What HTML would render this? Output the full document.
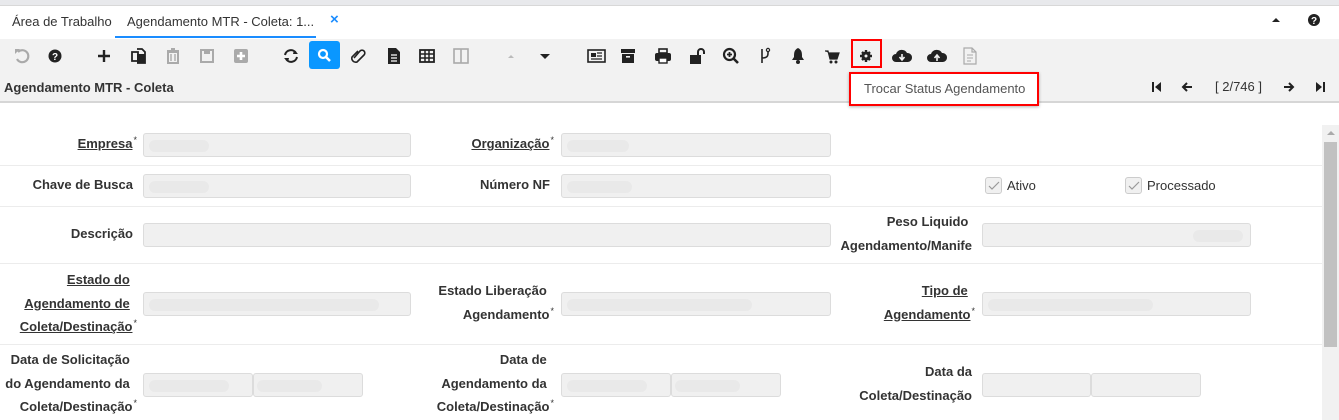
<!DOCTYPE html>
<html><head><meta charset="utf-8">
<style>
*{margin:0;padding:0;box-sizing:border-box}
body{width:1339px;height:420px;overflow:hidden;background:#fff;font-family:"Liberation Sans",Arial,sans-serif;position:relative;color:#333}
.a{position:absolute}
.topstrip{left:0;top:0;width:1339px;height:6px;background:#e8e9ec;border-bottom:1px solid #d8d8d8}
.tabs{left:0;top:7px;width:1339px;height:32px;background:#fff}
.tab{font-size:13px;color:#333;top:14px}
.tb{left:0;top:39px;width:1339px;height:64px;background:#f2f2f2;border-bottom:2px solid #d6d6d6}
.ic{position:absolute;top:46px;width:20px;height:20px}
.lbl{position:absolute;font-size:13px;font-weight:bold;color:#333;text-align:right;line-height:23.5px;white-space:nowrap}
.lbl u{text-decoration:underline}
.lbl s{text-decoration:none;font-size:9px;font-weight:normal;position:relative;top:-5px;margin-left:1px;line-height:0}
.f{position:absolute;height:24px;background:#f0f0f0;border:1px solid #dcdcdc;border-radius:3px}
.f i{position:absolute;top:6px;height:12px;background:#e9e9e9;border-radius:6px}
.line{position:absolute;left:0;width:1322px;height:1px;background:#ececec}
</style></head><body>
<div class="a topstrip"></div>
<div class="a tabs"></div>
<div class="a tab" style="left:12px">Área de Trabalho</div>
<div class="a tab" style="left:127px">Agendamento MTR - Coleta: 1...</div>
<div class="a" style="left:330px;top:11px;color:#1a8cff;font-size:15px;font-weight:bold">×</div>
<div class="a" style="left:115px;top:36px;width:201px;height:2px;background:#1a8cff"></div>
<svg class="a" style="left:1270px;top:15px" width="12" height="10"><path d="M2 7 L6 3 L10 7Z" fill="#222"/></svg>
<svg class="a" style="left:1307px;top:13px" width="14" height="14"><circle cx="7" cy="7" r="6" fill="#222"/><text x="7" y="11" font-size="10" font-weight="bold" fill="#fff" text-anchor="middle" font-family="Liberation Sans">?</text></svg>

<div class="a tb"></div>
<svg class="ic" style="left:12px" viewBox="0 0 20 20"><path d="M6 6 A6 6 0 1 1 5 13" fill="none" stroke="#aaa" stroke-width="2.2"/><path d="M3 3 L8 3 L3 8Z" fill="#aaa"/></svg>
<svg class="ic" style="left:45px" viewBox="0 0 20 20"><circle cx="10" cy="10" r="6.5" fill="#222"/><text x="10" y="14" font-size="10" font-weight="bold" fill="#fff" text-anchor="middle" font-family="Liberation Sans">?</text></svg>
<svg class="ic" style="left:94px" viewBox="0 0 20 20"><path d="M10 4V16M4 10H16" stroke="#222" stroke-width="2.4"/></svg>
<svg class="ic" style="left:129px" viewBox="0 0 20 20"><path d="M3 6H9V15H3Z M8 3H13L16 6V17H8" fill="none" stroke="#222" stroke-width="1.8"/><rect x="8" y="8" width="8" height="9" fill="#222"/></svg>
<svg class="ic" style="left:163px" viewBox="0 0 20 20"><path d="M4 5H16M8 3H12M5 6H15V17H5Z" fill="none" stroke="#aaa" stroke-width="2"/><path d="M8 8V15M12 8V15" stroke="#aaa" stroke-width="1.4"/></svg>
<svg class="ic" style="left:197px" viewBox="0 0 20 20"><rect x="4" y="4" width="12" height="12" fill="none" stroke="#aaa" stroke-width="2"/><rect x="7" y="4" width="6" height="4" fill="#aaa"/></svg>
<svg class="ic" style="left:231px" viewBox="0 0 20 20"><rect x="3" y="3" width="14" height="14" rx="2" fill="#aaa"/><path d="M10 6V14M6 10H14" stroke="#fff" stroke-width="2.6"/></svg>
<svg class="ic" style="left:281px" viewBox="0 0 20 20"><path d="M4 9A6 6 0 0 1 15 7M16 11A6 6 0 0 1 5 13" fill="none" stroke="#222" stroke-width="2"/><path d="M13 4L17 8L12 8Z M7 16L3 12L8 12Z" fill="#222"/></svg>
<div class="a" style="left:309px;top:41px;width:31px;height:28px;background:#0a97ff;border-radius:3px"></div>
<svg class="ic" style="left:314px;top:45px" viewBox="0 0 20 20"><circle cx="9" cy="9" r="4" fill="none" stroke="#fff" stroke-width="2.2"/><path d="M12 12L16 16" stroke="#fff" stroke-width="2.6"/></svg>
<svg class="ic" style="left:348px" viewBox="0 0 20 20"><path d="M6 12L12 5A2.5 2.5 0 0 1 16 9L9 16A4 4 0 0 1 4 11L10 5" fill="none" stroke="#222" stroke-width="1.6"/></svg>
<svg class="ic" style="left:384px" viewBox="0 0 20 20"><path d="M4 2H12L16 6V18H4Z" fill="#222"/><path d="M7 9H13M7 12H13M7 15H13" stroke="#fff" stroke-width="1.2"/></svg>
<svg class="ic" style="left:417px" viewBox="0 0 20 20"><rect x="3" y="4" width="14" height="12" fill="none" stroke="#222" stroke-width="1.8"/><path d="M3 8H17M3 12H17M8 4V16M12 4V16" stroke="#222" stroke-width="1.5"/></svg>
<svg class="ic" style="left:451px" viewBox="0 0 20 20"><rect x="3" y="3" width="14" height="14" fill="none" stroke="#aaa" stroke-width="1.6"/><path d="M10 3V17" stroke="#aaa" stroke-width="1.6"/></svg>
<svg class="ic" style="left:501px" viewBox="0 0 20 20"><path d="M7 12L10 9L13 12Z" fill="#bbb"/></svg>
<svg class="ic" style="left:535px" viewBox="0 0 20 20"><path d="M5 8H15L10 13Z" fill="#222"/></svg>
<svg class="ic" style="left:586px" viewBox="0 0 20 20"><rect x="2" y="4" width="17" height="12" fill="none" stroke="#222" stroke-width="1.6"/><rect x="5" y="7" width="5" height="4" fill="#222"/><path d="M11 7H16M11 10H16M5 13H16" stroke="#222" stroke-width="1.2"/></svg>
<svg class="ic" style="left:618px" viewBox="0 0 20 20"><rect x="3" y="3" width="14" height="4" fill="#222"/><rect x="4" y="8" width="12" height="9" fill="#222"/><rect x="8" y="10" width="4" height="1.6" fill="#f2f2f2"/></svg>
<svg class="ic" style="left:653px" viewBox="0 0 20 20"><rect x="6" y="3" width="8" height="4" fill="none" stroke="#222" stroke-width="1.6"/><rect x="2" y="7" width="16" height="8" rx="2" fill="#222"/><rect x="6" y="12" width="8" height="5" fill="#fff" stroke="#222" stroke-width="1.4"/></svg>
<svg class="ic" style="left:688px" viewBox="0 0 20 20"><rect x="2" y="9" width="11" height="9" fill="#222"/><path d="M10 9V6A3 3 0 0 1 16 6V8" fill="none" stroke="#222" stroke-width="2"/></svg>
<svg class="ic" style="left:721px" viewBox="0 0 20 20"><circle cx="8.5" cy="8.5" r="5.5" fill="none" stroke="#222" stroke-width="2.2"/><path d="M12.5 12.5L17 17" stroke="#222" stroke-width="2.6"/><path d="M8.5 6V11M6 8.5H11" stroke="#222" stroke-width="1.8"/></svg>
<svg class="ic" style="left:755px" viewBox="0 0 20 20"><path d="M7 3V17M7 12C14 12 13 8 13 5" fill="none" stroke="#222" stroke-width="1.6"/><circle cx="13" cy="4" r="1.6" fill="none" stroke="#222" stroke-width="1.2"/></svg>
<svg class="ic" style="left:788px" viewBox="0 0 20 20"><path d="M10 2C6 4 6 7 6 11L4 14H16L14 11C14 7 14 4 10 2Z" fill="#222"/><circle cx="10" cy="16" r="2" fill="#222"/></svg>
<svg class="ic" style="left:822px" viewBox="0 0 20 20"><path d="M3 5H6L8 13H15L17 7H7" fill="#222" stroke="#222" stroke-width="1.2"/><circle cx="9" cy="16" r="1.5" fill="#222"/><circle cx="14" cy="16" r="1.5" fill="#222"/></svg>
<div class="a" style="left:851px;top:39px;width:31px;height:29px;border:2.5px solid #f00"></div>
<svg class="ic" style="left:856px" viewBox="0 0 20 20"><circle cx="10" cy="10" r="4.5" fill="#222"/><path d="M10 4V16M4 10H16M6 6L14 14M14 6L6 14" stroke="#222" stroke-width="2.4"/><circle cx="10" cy="10" r="1.5" fill="#f2f2f2"/></svg>
<svg class="ic" style="left:891px;width:22px" viewBox="0 0 22 20"><path d="M5 16A4 4 0 0 1 5 8A6 6 0 0 1 16 7A4.5 4.5 0 0 1 17 16Z" fill="#222"/><path d="M11 8V13M8.5 11L11 14L13.5 11" fill="none" stroke="#f2f2f2" stroke-width="1.6"/></svg>
<svg class="ic" style="left:926px;width:22px" viewBox="0 0 22 20"><path d="M5 16A4 4 0 0 1 5 8A6 6 0 0 1 16 7A4.5 4.5 0 0 1 17 16Z" fill="#222"/><path d="M11 15V10M8.5 12L11 9L13.5 12" fill="none" stroke="#f2f2f2" stroke-width="1.6"/></svg>
<svg class="ic" style="left:960px" viewBox="0 0 20 20"><path d="M4 2H12L16 6V18H4Z M12 2V6H16" fill="none" stroke="#aaa" stroke-width="1.2"/><path d="M7 9H13M7 12H13M7 15H11" stroke="#aaa" stroke-width="1.1"/></svg>

<div class="a" style="left:4px;top:80px;font-size:13px;font-weight:bold;color:#333">Agendamento MTR - Coleta</div>
<div class="a" style="left:849px;top:72px;width:190px;height:34px;border:2.5px solid #f00;background:#fff;box-shadow:0 1px 3px rgba(0,0,0,.3)"></div>
<div class="a" style="left:864px;top:81px;font-size:13px;color:#555">Trocar Status Agendamento</div>

<svg class="a" style="left:1150px;top:80px" width="14" height="14"><path d="M3 2V12" stroke="#222" stroke-width="2"/><path d="M11 2L5 7L11 12Z" fill="#222"/></svg>
<svg class="a" style="left:1180px;top:80px" width="14" height="14"><path d="M3 7H12M7 3L3 7L7 11" fill="none" stroke="#222" stroke-width="2"/></svg>
<div class="a" style="left:1215px;top:79px;font-size:13px;color:#333">[ 2/746 ]</div>
<svg class="a" style="left:1282px;top:80px" width="14" height="14"><path d="M2 7H11M7 3L11 7L7 11" fill="none" stroke="#222" stroke-width="2"/></svg>
<svg class="a" style="left:1313px;top:80px" width="14" height="14"><path d="M11 2V12" stroke="#222" stroke-width="2"/><path d="M3 2L9 7L3 12Z" fill="#222"/></svg>

<div class="a" style="left:1322px;top:125px;width:17px;height:295px;background:#f1f1f1"></div>
<svg class="a" style="left:1325px;top:128px" width="12" height="10"><path d="M2 7L6 3L10 7Z" fill="#aaa"/></svg>
<div class="a" style="left:1324px;top:142px;width:13px;height:205px;background:#c1c1c1"></div>

<div class="line" style="top:165px"></div>
<div class="line" style="top:206px"></div>
<div class="line" style="top:263px"></div>
<div class="line" style="top:344px"></div>

<div class="lbl" style="right:1202px;top:132px"><u>Empresa</u><s>*</s></div>
<div class="lbl" style="right:1206px;top:173px">Chave de Busca</div>
<div class="lbl" style="right:1206px;top:222px">Descrição</div>
<div class="lbl" style="right:1202px;top:268px"><u>Estado do</u>&nbsp;&nbsp;<br><u>Agendamento de</u>&nbsp;&nbsp;<br><u>Coleta/Destinação</u><s>*</s></div>
<div class="lbl" style="right:1202px;top:348px">Data de Solicitação&nbsp;&nbsp;<br>do Agendamento da&nbsp;&nbsp;<br>Coleta/Destinação<s>*</s></div>
<div class="lbl" style="right:785px;top:132px"><u>Organização</u><s>*</s></div>
<div class="lbl" style="right:789px;top:173px">Número NF</div>
<div class="lbl" style="right:785px;top:279px">Estado Liberação&nbsp;&nbsp;<br>Agendamento<s>*</s></div>
<div class="lbl" style="right:785px;top:348px">Data de&nbsp;&nbsp;<br>Agendamento da&nbsp;&nbsp;<br>Coleta/Destinação<s>*</s></div>
<div class="lbl" style="right:367px;top:210px">Peso Liquido&nbsp;<br>Agendamento/Manife</div>
<div class="lbl" style="right:364px;top:279px"><u>Tipo de</u>&nbsp;&nbsp;<br><u>Agendamento</u><s>*</s></div>
<div class="lbl" style="right:367px;top:360px">Data da<br>Coleta/Destinação</div>

<div class="f" style="left:143px;top:133px;width:268px"><i style="left:5px;width:60px"></i></div>
<div class="f" style="left:561px;top:133px;width:270px"><i style="left:5px;width:62px"></i></div>
<div class="f" style="left:143px;top:174px;width:268px"><i style="left:5px;width:60px"></i></div>
<div class="f" style="left:561px;top:174px;width:270px"><i style="left:5px;width:65px"></i></div>
<div class="f" style="left:143px;top:223px;width:688px"></div>
<div class="f" style="left:982px;top:223px;width:269px"><i style="left:210px;width:50px"></i></div>
<div class="f" style="left:143px;top:292px;width:268px"><i style="left:5px;width:230px"></i></div>
<div class="f" style="left:561px;top:292px;width:270px"><i style="left:5px;width:185px"></i></div>
<div class="f" style="left:982px;top:292px;width:269px"><i style="left:5px;width:165px"></i></div>
<div class="f" style="left:143px;top:373px;width:110px"><i style="left:5px;width:80px"></i></div>
<div class="f" style="left:253px;top:373px;width:110px"><i style="left:3px;width:65px"></i></div>
<div class="f" style="left:561px;top:373px;width:110px"><i style="left:5px;width:80px"></i></div>
<div class="f" style="left:671px;top:373px;width:110px"><i style="left:3px;width:65px"></i></div>
<div class="f" style="left:982px;top:373px;width:109px"></div>
<div class="f" style="left:1091px;top:373px;width:110px"></div>

<div class="a" style="left:985px;top:177px;width:17px;height:17px;border:1px solid #ccc;border-radius:3px;background:#f0f0f0"></div>
<svg class="a" style="left:987px;top:179px" width="14" height="14"><path d="M2 7L5 10L12 3" fill="none" stroke="#999" stroke-width="1.2"/></svg>
<div class="a" style="left:1007px;top:178px;font-size:13px;color:#333">Ativo</div>
<div class="a" style="left:1125px;top:177px;width:17px;height:17px;border:1px solid #ccc;border-radius:3px;background:#f0f0f0"></div>
<svg class="a" style="left:1127px;top:179px" width="14" height="14"><path d="M2 7L5 10L12 3" fill="none" stroke="#999" stroke-width="1.2"/></svg>
<div class="a" style="left:1147px;top:178px;font-size:13px;color:#333">Processado</div>
</body></html>
